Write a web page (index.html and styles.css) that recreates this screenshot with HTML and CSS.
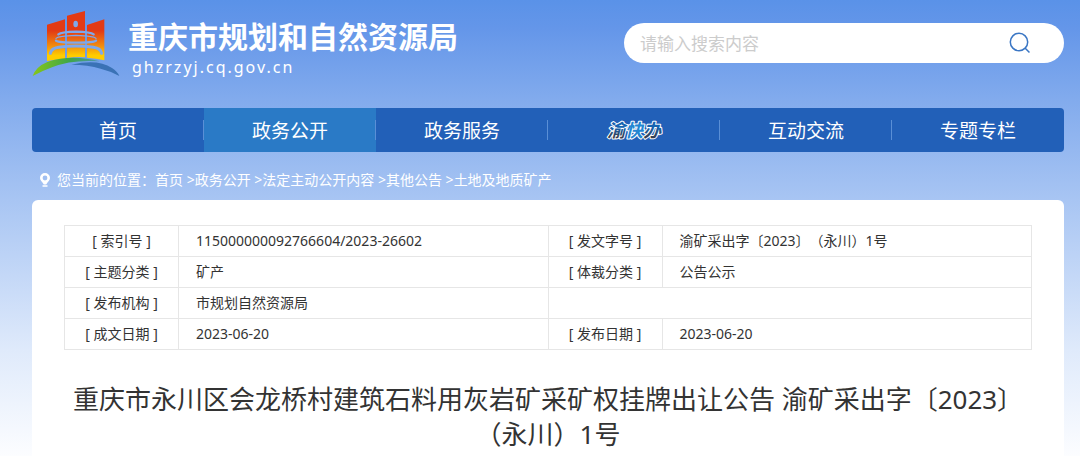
FILE: index.html
```html
<!DOCTYPE html>
<html lang="zh-CN">
<head>
    <meta charset="UTF-8">
    <meta name="viewport" content="width=device-width, initial-scale=1.0">
    <title>重庆市规划和自然资源局</title>
    <link rel="stylesheet" href="styles.css">
</head>
<body>
    <header class="header">
        <a class="brand" href="#">
            <svg class="brand-logo" viewBox="12 12 264 198" aria-hidden="true">
                <defs>
                    <linearGradient id="tower" gradientUnits="userSpaceOnUse" x1="0" y1="15" x2="0" y2="163">
                        <stop offset="0.4" stop-color="#e23a14"/>
                        <stop offset="0.7" stop-color="#f08a10"/>
                        <stop offset="0.9" stop-color="#ffcc00"/>
                    </linearGradient>
                    <linearGradient id="hill" x1="0" y1="0" x2="1" y2="0">
                        <stop offset="0" stop-color="#86c61a"/>
                        <stop offset="0.55" stop-color="#3fa648"/>
                        <stop offset="1" stop-color="#4d94b4"/>
                    </linearGradient>
                </defs>
                <g fill="url(#tower)">
                    <path d="M57 56L111 40V159Q80 160 57 165Z"/>
                    <path d="M117 29L171 15V154Q145 152 117 156Z"/>
                    <path d="M177 57L229 40V163Q205 157 177 155Z"/>
                </g>
                <ellipse cx="143" cy="54" rx="7" ry="10" fill="#7fa8ea"/>
                <g fill="none" stroke="#7fa8ea" stroke-linecap="round">
                    <path d="M91 85Q100 78 144 77Q188 78 197 85" stroke-width="7"/>
                    <path d="M84 97Q90 90 144 88Q198 90 204 97" stroke-width="4"/>
                    <path d="M84 104Q90 110 144 110Q198 110 204 104" stroke-width="7"/>
                    <path d="M67 142Q70 127 92 124Q144 116 196 124Q218 127 221 142" stroke-width="9"/>
                </g>
                <path d="M14 210Q24 182 58 168Q130 144 216 166Q130 160 72 184Q40 196 14 210Z" fill="url(#hill)"/>
                <path d="M130 176Q210 158 252 186Q268 196 274 210Q250 196 218 188Q180 176 130 176Z" fill="#3a72b6"/>
            </svg>
            <span class="brand-text">
                <span class="brand-name">重庆市规划和自然资源局</span>
                <span class="brand-domain">ghzrzyj.cq.gov.cn</span>
            </span>
        </a>
        <form class="search">
            <input class="search-input" type="text" placeholder="请输入搜索内容" aria-label="请输入搜索内容">
            <button class="search-btn" type="button" aria-label="搜索">
                <svg width="22" height="22" viewBox="0 0 22 22" fill="none" stroke="#3a76c4" stroke-width="1.5" aria-hidden="true">
                    <circle cx="10" cy="10" r="8.7"/>
                    <path d="M16 16L20.500 20.500"/>
                </svg>
            </button>
        </form>
    </header>

    <nav class="nav">
        <a class="nav-item" href="#">首页</a>
        <a class="nav-item active" href="#">政务公开</a>
        <a class="nav-item" href="#">政务服务</a>
        <a class="nav-item" href="#">
            <svg class="nav-logo" width="60" height="26" viewBox="0 0 60 26">
                <defs>
                    <linearGradient id="badge" x1="0" y1="0" x2="0" y2="1">
                        <stop offset="0.4" stop-color="#1763b0"/>
                        <stop offset="0.85" stop-color="#3b3a42"/>
                    </linearGradient>
                </defs>
                <text x="3" y="20" fill="url(#badge)">渝<tspan fill="#2386d2">快</tspan>办</text>
            </svg>
        </a>
        <a class="nav-item" href="#">互动交流</a>
        <a class="nav-item" href="#">专题专栏</a>
    </nav>

    <div class="breadcrumb">
        <svg class="pin" width="10" height="14" viewBox="0 0 10 14" aria-hidden="true">
            <path d="M5 0a5 5 0 0 1 5 5c0 2.500-2.500 4-3.800 6.500H3.800C2.500 9 0 7.500 0 5a5 5 0 0 1 5-5zm0 2.600a2.400 2.400 0 1 0 0 4.800a2.400 2.400 0 0 0 0-4.800z" fill="#fff" fill-rule="evenodd"/>
            <path d="M2.500 13h5" stroke="#fff" stroke-width="1.500"/>
        </svg>
        <span>您当前的位置：<a href="#">首页</a> &gt;<a href="#">政务公开</a> &gt;<a href="#">法定主动公开内容</a> &gt;<a href="#">其他公告</a> &gt;<a href="#">土地及地质矿产</a></span>
    </div>

    <main class="card">
        <table class="info">
            <colgroup>
                <col class="col-label">
                <col>
                <col class="col-label">
                <col>
            </colgroup>
            <tr>
                <th scope="row">[ 索引号 ]</th>
                <td>115000000092766604/2023-26602</td>
                <th scope="row">[ 发文字号 ]</th>
                <td>渝矿采出字〔2023〕（永川）1号</td>
            </tr>
            <tr>
                <th scope="row">[ 主题分类 ]</th>
                <td>矿产</td>
                <th scope="row">[ 体裁分类 ]</th>
                <td>公告公示</td>
            </tr>
            <tr>
                <th scope="row">[ 发布机构 ]</th>
                <td>市规划自然资源局</td>
                <td colspan="2"></td>
            </tr>
            <tr>
                <th scope="row">[ 成文日期 ]</th>
                <td>2023-06-20</td>
                <th scope="row">[ 发布日期 ]</th>
                <td>2023-06-20</td>
            </tr>
        </table>
        <h1 class="title">重庆市永川区会龙桥村建筑石料用灰岩矿采矿权挂牌出让公告 渝矿采出字〔2023〕（永川）1号</h1>
    </main>
</body>
</html>
```
FILE: styles.css
```css
* {
    box-sizing: border-box;
}

body {
    margin: 0;
    padding: 0 16px 0 32px;
    min-height: 100vh;
    display: flex;
    flex-direction: column;
    font-family: "Noto Sans", "Noto Sans CJK SC", sans-serif;
    font-size: 14px;
    color: #333;
    text-spacing-trim: space-all;
    background: linear-gradient(#5a92e8 0, #6496e9 28px, #82abed 100px, #a8c5f3 200px, #dfeafb 350px, #fcfdff 456px);
}

a {
    color: inherit;
    text-decoration: none;
}

/* Header */
.header {
    display: flex;
    align-items: center;
    justify-content: space-between;
    padding: 7px 0 29px;
}

.brand {
    display: flex;
    align-items: center;
    gap: 8px;
    color: #fff;
}

.brand-logo {
    width: 88px;
    height: 66px;
}

.brand-text {
    display: flex;
    flex-direction: column;
    padding-top: 12px;
}

.brand-name {
    font-size: 30px;
    font-weight: bold;
    line-height: 36px;
}

.brand-domain {
    padding-left: 4px;
    font-size: 16px;
    line-height: 24px;
    letter-spacing: 2px;
}

.search {
    display: flex;
    width: 440px;
    height: 40px;
    background: #fff;
    border-radius: 20px;
}

.search-input {
    flex: 1;
    min-width: 0;
    padding: 0 16px;
    border: 0;
    outline: none;
    background: none;
    font-family: inherit;
    font-size: 17px;
    color: #333;
}

.search-input::placeholder {
    color: #ccc;
}

.search-btn {
    display: flex;
    align-items: center;
    padding: 0 33px 0 16px;
    border: 0;
    background: none;
    cursor: pointer;
}

/* Navigation */
.nav {
    display: flex;
    height: 44px;
    border-radius: 4px;
    overflow: hidden;
    background: #2260b8;
}

.nav-item {
    flex: 1;
    display: flex;
    align-items: center;
    justify-content: center;
    font-size: 19px;
    color: #fff;
    background: linear-gradient(#5a8fd6, #5a8fd6) right center / 1px 20px no-repeat;
}

.nav-item:last-child {
    background: none;
}

.nav-item.active {
    background-color: #2a7ac6;
}

.nav-logo text {
    font-size: 18px;
    font-weight: bold;
    font-style: italic;
    stroke: #fff;
    stroke-width: 2px;
    stroke-linejoin: round;
    paint-order: stroke;
}

/* Breadcrumb */
.breadcrumb {
    display: flex;
    align-items: center;
    gap: 7px;
    padding: 14px 8px 6px;
    line-height: 28px;
    color: #fff;
}

/* Content */
.card {
    flex: 1;
    padding: 25px 32px 0;
    background: #fff;
    border-radius: 6px 6px 0 0;
}

.info {
    width: 100%;
    table-layout: fixed;
    border-collapse: collapse;
}

.col-label {
    width: 114px;
}

.info th,
.info td {
    height: 31px;
    padding: 0 17px;
    border: 1px solid #e6e6e6;
    text-align: left;
    font-weight: normal;
    line-height: 30px;
}

.info th {
    padding: 0;
    text-align: center;
}

.title {
    margin: 32px 0 0;
    font-size: 26px;
    font-weight: normal;
    line-height: 35px;
    text-align: center;
}
```
